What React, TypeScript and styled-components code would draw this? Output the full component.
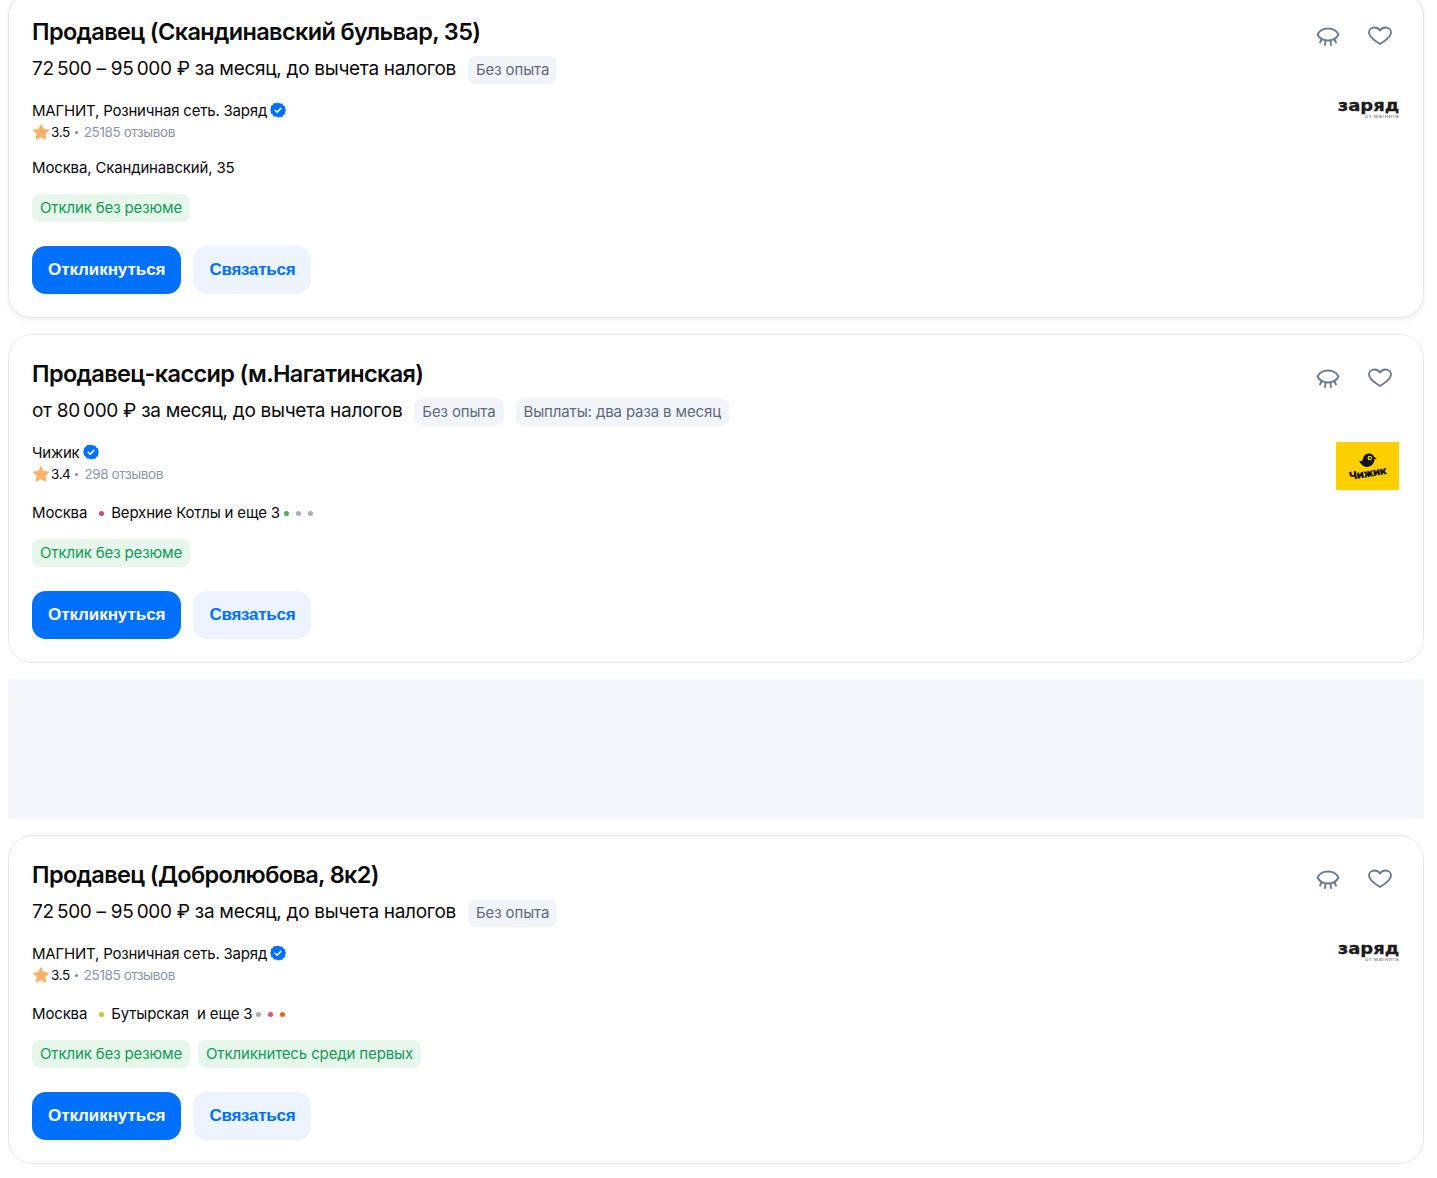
import React from 'react';
import styled, { createGlobalStyle } from 'styled-components';

const GlobalStyle = createGlobalStyle`
  html, body {
    margin: 0;
    padding: 0;
    background: #ffffff;
    font-family: Inter, 'Noto Sans', sans-serif;
    color: #0a0a0a;
    overflow: hidden;
  }
`;

type MetroStop = { name: string; color: string };

type Vacancy = {
  title: string;
  salary: string;
  tags: string[];
  company: string;
  rating: string;
  reviews: string;
  logo: 'zaryad' | 'chizhik';
  city: string;
  metro?: MetroStop;
  moreDots?: string[];
  perks: string[];
  shadow?: boolean;
};

const vacancies: Vacancy[] = [
  {
    title: 'Продавец (Скандинавский бульвар, 35)',
    salary: '72\u2009500 – 95\u2009000 ₽ за месяц, до вычета налогов',
    tags: ['Без опыта'],
    company: 'МАГНИТ, Розничная сеть. Заряд',
    rating: '3.5',
    reviews: '25185 отзывов',
    logo: 'zaryad',
    city: 'Москва, Скандинавский, 35',
    perks: ['Отклик без резюме'],
    shadow: true,
  },
  {
    title: 'Продавец-кассир (м.Нагатинская)',
    salary: 'от 80\u2009000 ₽ за месяц, до вычета налогов',
    tags: ['Без опыта', 'Выплаты: два раза в месяц'],
    company: 'Чижик',
    rating: '3.4',
    reviews: '298 отзывов',
    logo: 'chizhik',
    city: 'Москва',
    metro: { name: 'Верхние Котлы', color: '#cf4a6e' },
    moreDots: ['#4caf50', '#a9acb2', '#a9acb2'],
    perks: ['Отклик без резюме'],
  },
  {
    title: 'Продавец (Добролюбова, 8к2)',
    salary: '72\u2009500 – 95\u2009000 ₽ за месяц, до вычета налогов',
    tags: ['Без опыта'],
    company: 'МАГНИТ, Розничная сеть. Заряд',
    rating: '3.5',
    reviews: '25185 отзывов',
    logo: 'zaryad',
    city: 'Москва',
    metro: { name: 'Бутырская\u00a0', color: '#b5cf2c' },
    moreDots: ['#a9acb2', '#ef4a7d', '#f2630f'],
    perks: ['Отклик без резюме', 'Откликнитесь среди первых'],
  },
];

const Page = styled.main`
  display: flex;
  flex-direction: column;
  gap: 16px;
  margin-top: -8px;
  padding: 0 13px 0 8px;
`;

const Card = styled.article<{ $shadow?: boolean }>`
  display: flex;
  flex-direction: column;
  padding: 23px;
  border: 1px solid #e3e7ee;
  border-radius: 24px;
  background: #ffffff;
  box-shadow: ${(p) => (p.$shadow ? '0 2px 6px rgba(12, 38, 84, 0.08)' : 'none')};
`;

const AdSlot = styled.div`
  height: 140px;
  border-radius: 4px;
  background: #f4f6fb;
`;

const HeadRow = styled.div`
  display: flex;
  justify-content: space-between;
  align-items: flex-start;
  height: 32px;
`;

const Title = styled.h2`
  margin: 0;
  padding-top: 1px;
  font-size: 23.5px;
  line-height: 30px;
  font-weight: 600;
  letter-spacing: -0.64px;
  color: #0a0a0a;
`;

const Actions = styled.div`
  display: flex;
  gap: 20px;
  padding: 4px 4px 0 0;
`;

const IconButton = styled.button`
  display: flex;
  width: 32px;
  height: 32px;
  padding: 0;
  border: 0;
  background: none;
  align-items: center;
  justify-content: center;
  cursor: pointer;
  color: #6a7b8f;
`;

const SalaryRow = styled.div`
  display: flex;
  align-items: center;
  gap: 12px;
  margin-top: 8px;
  height: 28px;
`;

const Salary = styled.span`
  font-size: 19px;
  line-height: 24px;
  letter-spacing: -0.3px;
  margin-top: -2px;
`;

const Tag = styled.span`
  display: inline-flex;
  align-items: center;
  box-sizing: border-box;
  height: 28px;
  padding: 0 8px 2px;
  border-radius: 8px;
  background: #f1f4f9;
  color: #5f6b7c;
  font-size: 15px;
  letter-spacing: -0.13px;
  white-space: nowrap;
`;

const PerkList = styled.div`
  display: flex;
  gap: 8px;
  margin-top: 16px;
`;

const Perk = styled(Tag)`
  background: #e8f7ec;
  color: #0d9c55;
`;

const CompanyRow = styled.div`
  display: flex;
  justify-content: space-between;
  align-items: flex-start;
  height: 42px;
  margin-top: 16px;
`;

const CompanyInfo = styled.div`
  display: flex;
  flex-direction: column;
  gap: 2px;
`;

const CompanyName = styled.div`
  display: flex;
  align-items: center;
  gap: 3px;
  height: 20px;
  font-size: 15px;
  letter-spacing: -0.2px;
`;

const RatingRow = styled.div`
  display: flex;
  align-items: center;
  box-sizing: border-box;
  height: 20px;
  padding-bottom: 1px;
  font-size: 13.5px;
  letter-spacing: -0.4px;
`;

const RatingDot = styled.span`
  width: 3px;
  height: 3px;
  margin: 2px 6px 0 5px;
  border-radius: 50%;
  background: #7a889a;
`;

const Reviews = styled.span`
  color: #8a96a8;
`;

const AddressRow = styled.div<{ $metro?: boolean }>`
  display: flex;
  align-items: center;
  box-sizing: border-box;
  height: 20px;
  padding-bottom: 2px;
  margin-top: ${(p) => (p.$metro ? '19px' : '16px')};
  font-size: 15px;
  letter-spacing: -0.16px;
`;

const MetroDot = styled.span<{ $color: string }>`
  flex: none;
  width: 5px;
  height: 5px;
  margin-top: 3px;
  border-radius: 50%;
  background: ${(p) => p.$color};
`;

const MetroName = styled.span`
  margin-left: 7px;
`;

const City = styled.span`
  margin-right: 12px;
`;

const MoreDots = styled.span`
  display: inline-flex;
  gap: 7px;
  margin-left: 4px;
`;

const ButtonRow = styled.div`
  display: flex;
  gap: 12px;
  margin-top: 24px;
`;

const Button = styled.button<{ $primary?: boolean }>`
  height: 48px;
  padding: 0 16px;
  border: 0;
  border-radius: 14px;
  font-family: 'Liberation Sans', Arial, sans-serif;
  font-size: 17px;
  font-weight: 700;
  letter-spacing: ${(p) => (p.$primary ? '-0.06px' : '-0.25px')};
  cursor: pointer;
  background: ${(p) => (p.$primary ? '#0070ff' : '#edf4fe')};
  color: ${(p) => (p.$primary ? '#ffffff' : '#0070ff')};
`;

const ZaryadLogo = styled.div`
  display: flex;
  flex-direction: column;
  align-items: flex-end;
  width: 63px;
  margin-right: 1px;
  color: #1c1c1c;
`;

const ZaryadWord = styled.span`
  font-family: 'DejaVu Sans', sans-serif;
  font-size: 15px;
  line-height: 13px;
  font-weight: 700;
  -webkit-text-stroke: 0.3px #1c1c1c;
  transform: scaleX(1.2);
  transform-origin: right center;
`;

const ZaryadSub = styled.span`
  margin-top: 1px;
  font-family: 'Liberation Sans', sans-serif;
  font-size: 6px;
  line-height: 5px;
  letter-spacing: 0.4px;
  color: #777777;
`;

const ChizhikLogo = styled.div`
  display: flex;
  flex-direction: column;
  align-items: center;
  justify-content: center;
  flex: none;
  width: 63px;
  height: 48px;
  margin-right: 1px;
  background: #ffd000;
`;

const ChizhikBird = styled.svg`
  margin-right: 2px;
`;

const ChizhikWord = styled.span`
  font-size: 11px;
  line-height: 11px;
  font-weight: 900;
  letter-spacing: -0.3px;
  color: #111111;
  transform: rotate(-9deg);
`;

const EyeIcon = () => (
  <svg width="26" height="26" viewBox="0 0 26 26" fill="none" stroke="currentColor" strokeWidth="1.9" strokeLinecap="round" strokeLinejoin="round">
    <path d="M2.500 11.500C4.500 7.500 8.500 5.500 13 5.500s8.500 2 10.500 6c-2 4-6 6-10.500 6s-8.500-2-10.500-6z" />
    <path d="M6.500 16.500L5 19.500M10.500 17.500L10 22M15.500 17.500l.5 4.500M19.500 16.500l1.500 3" />
  </svg>
);

const HeartIcon = () => (
  <svg width="26" height="26" viewBox="0 0 26 26" fill="none" stroke="currentColor" strokeWidth="1.9" strokeLinejoin="round">
    <path d="M13 21C8 18 2 14 2 9.500 2 6.500 4.500 4.500 7.500 4.500c2.300 0 4.300 1.100 5.500 3 1.200-1.900 3.200-3 5.500-3 3 0 5.500 2 5.500 5C24 14 18 18 13 21z" />
  </svg>
);

const VerifiedBadge = () => (
  <svg width="16" height="16" viewBox="0 0 18 18">
    <path fill="#0070ff" d="M9 .5l2.200 1.300 2.500-.1 1.200 2.200 2.200 1.200-.1 2.500L18 9l-1 1.900.1 2.500-2.200 1.200-1.200 2.200-2.500-.1L9 17.500l-2.200-1.300-2.500.1-1.200-2.200-2.200-1.200.1-2.500L0 9l1-1.900-.1-2.500 2.200-1.200 1.200-2.200 2.500.1z" />
    <path fill="none" stroke="#ffffff" strokeWidth="1.800" strokeLinecap="round" strokeLinejoin="round" d="M5.800 9.300l2.200 2.200 4.200-4.300" />
  </svg>
);

const StarIcon = () => (
  <svg width="18" height="18" viewBox="0 0 18 18" style={{ marginRight: 1 }}>
    <path fill="#ffb169" stroke="#ffb169" strokeWidth="1.500" strokeLinejoin="round" d="M9 2l2.200 4.600 5 .7-3.600 3.500.9 5L9 13.400l-4.500 2.400.9-5L1.800 7.300l5-.7z" />
  </svg>
);

const BirdIcon = () => (
  <ChizhikBird width="20" height="15" viewBox="0 0 20 15">
    <path fill="#111111" d="M2 7.500C4.500 9 5.500 7.500 6 5.500 6.800 2.300 9.300.5 12 .5c3.200 0 5.500 2.400 5.500 5.500 0 4.300-3.200 8-7.500 8-3.500 0-6.800-3-8-6.500z" />
    <path fill="#111111" d="M17 4l2.800 1.500-2.800 1z" />
    <circle cx="12.800" cy="5" r="2.300" fill="#ffd000" />
    <circle cx="13.100" cy="5" r="1.100" fill="#111111" />
  </ChizhikBird>
);

const Logo = ({ kind }: { kind: Vacancy['logo'] }) =>
  kind === 'zaryad' ? (
    <ZaryadLogo>
      <ZaryadWord>заряд</ZaryadWord>
      <ZaryadSub>от магнита</ZaryadSub>
    </ZaryadLogo>
  ) : (
    <ChizhikLogo>
      <BirdIcon />
      <ChizhikWord>Чижик</ChizhikWord>
    </ChizhikLogo>
  );

const VacancyCard = ({ vacancy }: { vacancy: Vacancy }) => (
  <Card $shadow={vacancy.shadow}>
    <HeadRow>
      <Title>{vacancy.title}</Title>
      <Actions>
        <IconButton aria-label="Скрыть">
          <EyeIcon />
        </IconButton>
        <IconButton aria-label="В избранное">
          <HeartIcon />
        </IconButton>
      </Actions>
    </HeadRow>
    <SalaryRow>
      <Salary>{vacancy.salary}</Salary>
      {vacancy.tags.map((tag) => (
        <Tag key={tag}>{tag}</Tag>
      ))}
    </SalaryRow>
    <CompanyRow>
      <CompanyInfo>
        <CompanyName>
          {vacancy.company}
          <VerifiedBadge />
        </CompanyName>
        <RatingRow>
          <StarIcon />
          {vacancy.rating}
          <RatingDot />
          <Reviews>{vacancy.reviews}</Reviews>
        </RatingRow>
      </CompanyInfo>
      <Logo kind={vacancy.logo} />
    </CompanyRow>
    <AddressRow $metro={!!vacancy.metro}>
      <City>{vacancy.city}</City>
      {vacancy.metro && (
        <>
          <MetroDot $color={vacancy.metro.color} />
          <MetroName>{vacancy.metro.name} и еще 3</MetroName>
          <MoreDots>
            {vacancy.moreDots?.map((color, i) => (
              <MetroDot key={i} $color={color} />
            ))}
          </MoreDots>
        </>
      )}
    </AddressRow>
    <PerkList>
      {vacancy.perks.map((perk) => (
        <Perk key={perk}>{perk}</Perk>
      ))}
    </PerkList>
    <ButtonRow>
      <Button $primary>Откликнуться</Button>
      <Button>Связаться</Button>
    </ButtonRow>
  </Card>
);

export default function App() {
  return (
    <>
      <GlobalStyle />
      <Page>
        <VacancyCard vacancy={vacancies[0]} />
        <VacancyCard vacancy={vacancies[1]} />
        <AdSlot />
        <VacancyCard vacancy={vacancies[2]} />
      </Page>
    </>
  );
}
